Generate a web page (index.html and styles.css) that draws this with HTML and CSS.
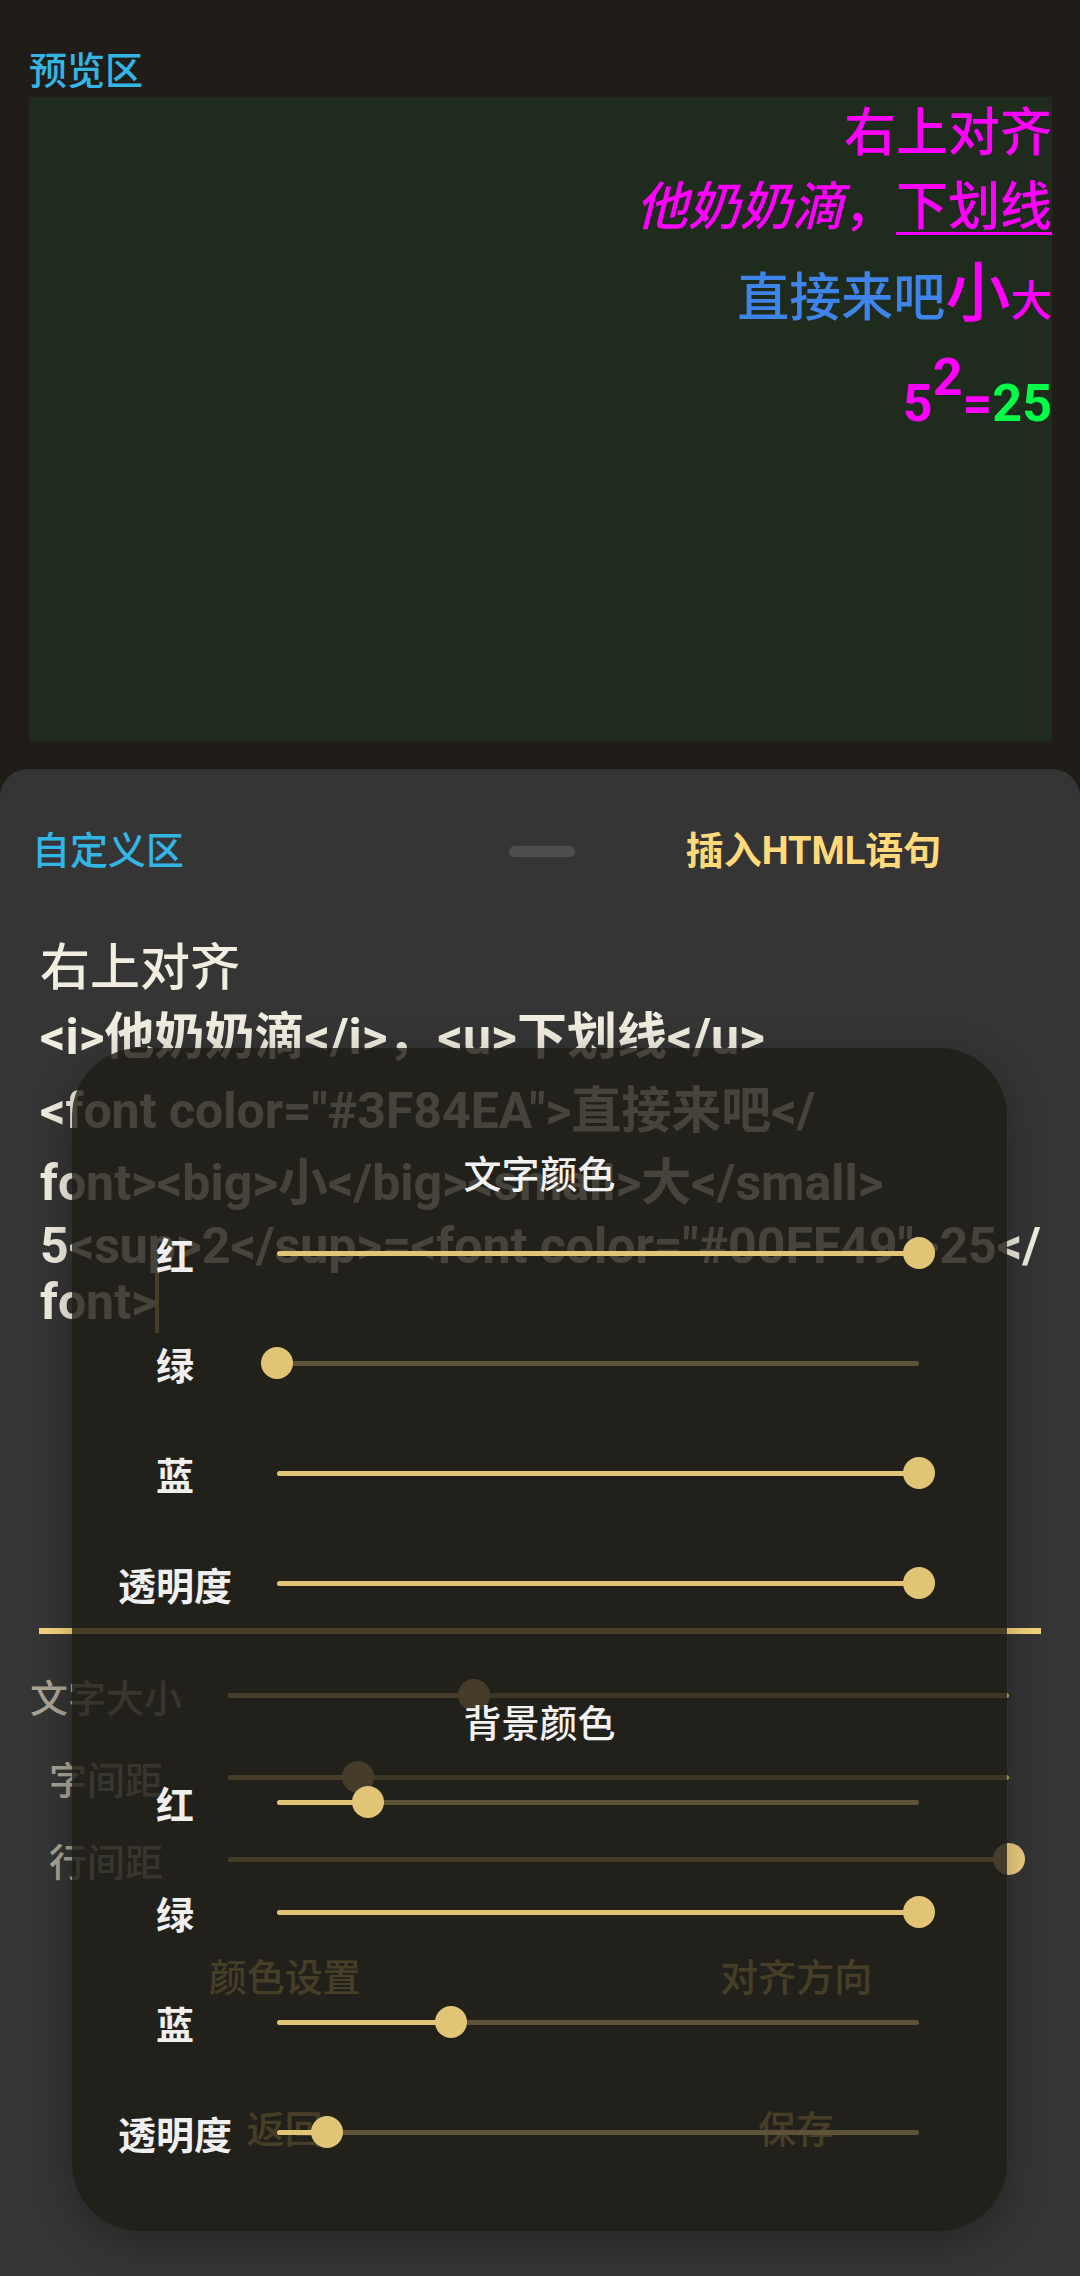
FILE: index.html
```html
<!DOCTYPE html>
<html lang="zh-CN">
<head>
    <meta charset="UTF-8">
    <meta name="viewport" content="width=device-width, initial-scale=1.0">
    <title>HTML 文本编辑</title>
    <link rel="stylesheet" href="styles.css">
</head>
<body>
    <div class="screen">
        <section class="preview-area">
            <div class="area-title">预览区</div>
            <div class="preview-box">
                <div class="pv-line pv1">右上对齐</div>
                <div class="pv-line pv2"><i>他奶奶滴</i>，<u>下划线</u></div>
                <div class="pv-line pv3"><span class="blue">直接来吧</span><big>小</big><small>大</small></div>
                <div class="pv-line pv4">5<sup>2</sup>=<span class="green">25</span></div>
            </div>
        </section>

        <section class="sheet">
            <div class="sheet-head">
                <div class="sheet-title">自定义区</div>
                <div class="handle"></div>
                <div class="insert-btn">插入HTML语句</div>
            </div>

            <div class="editor">
                <div class="ed-line e1">右上对齐</div>
                <div class="ed-line e2">&lt;i&gt;他奶奶滴&lt;/i&gt;，&lt;u&gt;下划线&lt;/u&gt;</div>
                <div class="ed-line e3">&lt;font color="#3F84EA"&gt;直接来吧&lt;/</div>
                <div class="ed-line e4">font&gt;&lt;big&gt;小&lt;/big&gt;&lt;small&gt;大&lt;/small&gt;</div>
                <div class="ed-line e5">5&lt;sup&gt;2&lt;/sup&gt;=&lt;font color="#00FF49"&gt;25&lt;/</div>
                <div class="ed-line e6">font&gt;<span class="caret"></span></div>
            </div>

            <div class="rule"></div>

            <div class="opt-list">
                <div class="opt-row">
                    <div class="opt-label">文字大小</div>
                    <div class="track">
                        <div class="fill" style="width: 31.5%"></div>
                        <div class="knob" style="left: 31.5%"></div>
                    </div>
                </div>
                <div class="opt-row">
                    <div class="opt-label">字间距</div>
                    <div class="track">
                        <div class="fill" style="width: 16.6%"></div>
                        <div class="knob" style="left: 16.6%"></div>
                    </div>
                </div>
                <div class="opt-row">
                    <div class="opt-label">行间距</div>
                    <div class="track">
                        <div class="fill" style="width: 100%"></div>
                        <div class="knob" style="left: 100%"></div>
                    </div>
                </div>
            </div>

            <div class="tabs">
                <div class="tab">颜色设置</div>
                <div class="tab">对齐方向</div>
            </div>

            <div class="actions">
                <div class="action">返回</div>
                <div class="action">保存</div>
            </div>
        </section>

        <!-- colour picker dialog -->
        <div class="dialog">
            <div class="dlg-title">文字颜色</div>
            <div class="dlg-row">
                <div class="dlg-label">红</div>
                <div class="track">
                    <div class="fill" style="width: 100%"></div>
                    <div class="knob" style="left: 100%"></div>
                </div>
            </div>
            <div class="dlg-row">
                <div class="dlg-label">绿</div>
                <div class="track">
                    <div class="fill" style="width: 0%"></div>
                    <div class="knob" style="left: 0%"></div>
                </div>
            </div>
            <div class="dlg-row">
                <div class="dlg-label">蓝</div>
                <div class="track">
                    <div class="fill" style="width: 100%"></div>
                    <div class="knob" style="left: 100%"></div>
                </div>
            </div>
            <div class="dlg-row">
                <div class="dlg-label">透明度</div>
                <div class="track">
                    <div class="fill" style="width: 100%"></div>
                    <div class="knob" style="left: 100%"></div>
                </div>
            </div>

            <div class="dlg-title second">背景颜色</div>
            <div class="dlg-row">
                <div class="dlg-label">红</div>
                <div class="track">
                    <div class="fill" style="width: 14.2%"></div>
                    <div class="knob" style="left: 14.2%"></div>
                </div>
            </div>
            <div class="dlg-row">
                <div class="dlg-label">绿</div>
                <div class="track">
                    <div class="fill" style="width: 100%"></div>
                    <div class="knob" style="left: 100%"></div>
                </div>
            </div>
            <div class="dlg-row">
                <div class="dlg-label">蓝</div>
                <div class="track">
                    <div class="fill" style="width: 27.1%"></div>
                    <div class="knob" style="left: 27.1%"></div>
                </div>
            </div>
            <div class="dlg-row">
                <div class="dlg-label">透明度</div>
                <div class="track">
                    <div class="fill" style="width: 7.8%"></div>
                    <div class="knob" style="left: 7.8%"></div>
                </div>
            </div>
        </div>
    </div>
</body>
</html>
```

FILE: styles.css
```css
body {
    margin: 0;
    padding: 0;
    background: #201d18;
    font-family: Roboto, "Noto Sans CJK SC", sans-serif;
}

.screen {
    position: relative;
    width: 1080px;
    height: 2276px;
    overflow: hidden;
    display: flex;
    flex-direction: column;
}

/* preview */
.preview-area {
    padding: 49px 28px 0 29px;
}

.area-title {
    height: 44px;
    line-height: 44px;
    font-size: 38px;
    font-weight: 500;
    color: #33b5e5;
}

.preview-box {
    margin-top: 4px;
    height: 644px;
    background: #1f2b1c;
    text-align: right;
    color: #ff00ff;
    font-size: 52px;
    font-weight: 500;
}

.pv-line {
    white-space: nowrap;
}

.pv-line big,
.pv-line small,
.pv-line sup {
    line-height: 1;
}

.pv1 { height: 73px; line-height: 73px; }
.pv2 { height: 76px; line-height: 76px; }
.pv3 { height: 106px; line-height: 106px; }
.pv4 { height: 82px; line-height: 82px; font-weight: bold; }

.pv2 u {
    text-decoration-thickness: 3px;
    text-underline-offset: 7px;
}

.pv3 big {
    font-size: 1.25em;
}

.pv3 small {
    font-size: 0.8em;
}

.pv4 sup {
    font-size: 1em;
    vertical-align: 26px;
}

.blue {
    color: #3f84ea;
}

.green {
    color: #00ff49;
}

/* bottom sheet */
.sheet {
    margin-top: 28px;
    flex: 1;
    background: #353535;
    border-radius: 28px 28px 0 0;
}

.sheet-head {
    display: grid;
    grid-template-columns: 1fr 66px 1fr;
    align-items: center;
    height: 44px;
    line-height: 44px;
    padding: 60px 28px 0 32px;
    font-size: 38px;
}

.sheet-title {
    color: #33b5e5;
    font-weight: 500;
}

.handle {
    height: 11px;
    border-radius: 6px;
    background: #4d4d4d;
}

.insert-btn {
    text-align: center;
    color: #ffd97a;
    font-weight: bold;
}

.editor {
    height: 694px;
    padding: 61px 0 0 40px;
}

.ed-line {
    white-space: nowrap;
    font-size: 50px;
    font-weight: bold;
    color: #f1ede0;
}

.e1 { height: 68px; line-height: 68px; font-weight: 500; }
.e2 { height: 71px; line-height: 71px; }
.e3 { height: 77px; line-height: 77px; }
.e4 { height: 67px; line-height: 67px; }
.e5 { height: 59px; line-height: 59px; }
.e6 { height: 52px; line-height: 52px; }

.caret {
    display: inline-block;
    width: 4px;
    height: 60px;
    margin: -8px 0 -8px -2px;
    vertical-align: -6px;
    background: #f6d47c;
}

.rule {
    height: 6px;
    margin: 0 39px;
    background: #f6d47c;
}

.opt-list {
    padding-top: 20px;
}

.opt-row {
    display: flex;
    align-items: center;
    height: 82px;
    padding: 0 71px 0 29px;
}

.opt-label {
    width: 154px;
    text-align: center;
    font-size: 38px;
    font-weight: 500;
    color: #aaa595;
}

.opt-row .track {
    margin-left: 45px;
    flex: 1;
    background: #c8ac6a;
}

.opt-row .fill,
.opt-row .knob {
    background: #f0d080;
}

.tabs,
.actions {
    display: grid;
    grid-template-columns: 1fr 1fr;
    padding: 0 28px 0 29px;
    font-size: 38px;
    font-weight: 500;
    color: #f6d47c;
    text-align: center;
}

.tabs {
    margin-top: 40px;
}

.actions {
    margin-top: 76px;
}

.tab,
.action {
    height: 76px;
    line-height: 76px;
}

/* slider */
.track {
    position: relative;
    height: 5px;
    border-radius: 3px;
    background: #5e5339;
}

.fill {
    height: 100%;
    border-radius: 3px;
    background: #e2c477;
}

.knob {
    position: absolute;
    top: 50%;
    width: 32px;
    height: 32px;
    margin: -16px 0 0 -16px;
    border-radius: 50%;
    background: #e2c477;
}

/* dialog */
.dialog {
    position: absolute;
    left: 72px;
    top: 1048px;
    width: 935px;
    height: 1183px;
    box-sizing: border-box;
    padding-top: 104px;
    background: rgba(30, 27, 21, 0.81);
    border-radius: 68px;
    box-shadow: 0 10px 40px rgba(0, 0, 0, 0.3);
}

.dlg-title {
    height: 46px;
    line-height: 46px;
    text-align: center;
    font-size: 38px;
    font-weight: 500;
    color: #f2f2f2;
}

.dlg-title.second {
    margin-top: 63px;
}

.dlg-row {
    display: flex;
    align-items: center;
    height: 110px;
    padding: 0 88px 0 30px;
}

.dlg-label {
    width: 146px;
    text-align: center;
    font-size: 38px;
    font-weight: bold;
    color: #efefef;
}

.dlg-row .track {
    margin-left: 29px;
    flex: 1;
}
```
